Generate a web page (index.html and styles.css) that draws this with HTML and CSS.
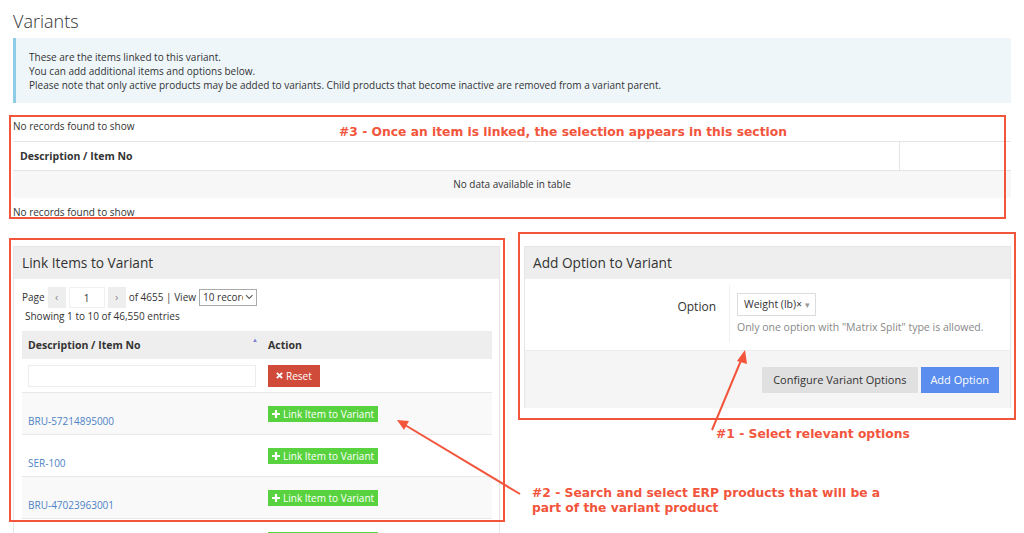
FILE: index.html
```html
<!DOCTYPE html>
<html>

<head>
    <link rel="stylesheet" href="styles.css">
</head>

<body>
    <div class="page">
        <h1 class="title">Variants</h1>
        <div class="info">
            <p>These are the items linked to this variant.</p>
            <p>You can add additional items and options below.</p>
            <p>Please note that only active products may be added to variants. Child products that become inactive are removed from a variant parent.</p>
        </div>

        <div class="linked">
            <p class="note">No records found to show</p>
            <table class="grid linked-grid">
                <thead>
                    <tr>
                        <th>Description / Item No</th>
                        <th class="spare"></th>
                    </tr>
                </thead>
                <tbody>
                    <tr class="odd">
                        <td colspan="2" class="empty">No data available in table</td>
                    </tr>
                </tbody>
            </table>
            <p class="note">No records found to show</p>
        </div>

        <div class="columns">
            <section class="panel">
                <h2 class="panel-head">Link Items to Variant</h2>
                <div class="panel-body">
                    <div class="pager">
                        <span>Page</span>
                        <span class="pg-btn">&lsaquo;</span>
                        <span class="pg-input">1</span>
                        <span class="pg-btn">&rsaquo;</span>
                        <span>of 4655 | View</span>
                        <span class="view-select">
                            <span class="vs-text">10 records</span>
                            <svg width="9" height="6" viewBox="0 0 9 6"><path d="M1 1l3.5 3.5L8 1" fill="none" stroke="#555" stroke-width="1.1"/></svg>
                        </span>
                    </div>
                    <p class="showing">Showing 1 to 10 of 46,550 entries</p>
                    <table class="grid items">
                        <thead>
                            <tr>
                                <th class="desc">Description / Item No <span class="sort">&#9650;</span></th>
                                <th>Action</th>
                            </tr>
                        </thead>
                        <tbody>
                            <tr class="filter">
                                <td><span class="search"></span></td>
                                <td>
                                    <span class="btn btn-reset">
                                        <svg width="7" height="7" viewBox="0 0 8 8"><path d="M1 1l6 6M7 1l-6 6" stroke="#fff" stroke-width="2.2"/></svg>
                                        Reset
                                    </span>
                                </td>
                            </tr>
                            <tr class="odd">
                                <td class="code"><a href="#">BRU-57214895000</a></td>
                                <td><span class="btn btn-link"><svg width="8" height="8" viewBox="0 0 8 8"><path d="M4 0v8M0 4h8" stroke="#fff" stroke-width="2.2"/></svg> Link Item to Variant</span></td>
                            </tr>
                            <tr>
                                <td class="code"><a href="#">SER-100</a></td>
                                <td><span class="btn btn-link"><svg width="8" height="8" viewBox="0 0 8 8"><path d="M4 0v8M0 4h8" stroke="#fff" stroke-width="2.2"/></svg> Link Item to Variant</span></td>
                            </tr>
                            <tr class="odd">
                                <td class="code"><a href="#">BRU-47023963001</a></td>
                                <td><span class="btn btn-link"><svg width="8" height="8" viewBox="0 0 8 8"><path d="M4 0v8M0 4h8" stroke="#fff" stroke-width="2.2"/></svg> Link Item to Variant</span></td>
                            </tr>
                            <tr>
                                <td class="code"><a href="#">BRU-47023963002</a></td>
                                <td><span class="btn btn-link"><svg width="8" height="8" viewBox="0 0 8 8"><path d="M4 0v8M0 4h8" stroke="#fff" stroke-width="2.2"/></svg> Link Item to Variant</span></td>
                            </tr>
                        </tbody>
                    </table>
                </div>
            </section>

            <section class="panel option-panel">
                <h2 class="panel-head">Add Option to Variant</h2>
                <div class="form-row">
                    <label class="form-label">Option</label>
                    <div class="form-field">
                        <span class="opt-select">Weight (lb)<span class="opt-clear">&times;</span><span class="opt-caret">&#9662;</span></span>
                        <p class="help">Only one option with "Matrix Split" type is allowed.</p>
                    </div>
                </div>
                <div class="panel-foot">
                    <span class="btn btn-default">Configure Variant Options</span>
                    <span class="btn btn-primary">Add Option</span>
                </div>
            </section>
        </div>
    </div>

    <!-- annotations drawn over the screenshot -->
    <div class="marks">
        <div class="mark-box box-linked"></div>
        <div class="mark-box box-items"></div>
        <div class="mark-box box-option"></div>
        <p class="mark-text text-linked">#3 - Once an item is linked, the selection appears in this section</p>
        <p class="mark-text text-option">#1 - Select relevant options</p>
        <p class="mark-text text-items">#2 - Search and select ERP products that will be a<br>part of the variant product</p>
        <svg class="arrows" width="1024" height="533" viewBox="0 0 1024 533">
            <line x1="712" y1="430" x2="742" y2="358" stroke="#f2553c" stroke-width="2"/>
            <polygon points="745,350 737,361 747,364" fill="#f2553c"/>
            <line x1="520" y1="494" x2="405" y2="425" stroke="#f2553c" stroke-width="2"/>
            <polygon points="397,420 404,430 409,421" fill="#f2553c"/>
        </svg>
    </div>
</body>

</html>
```

FILE: styles.css
```css
* {
    padding: 0;
    margin: 0;
    box-sizing: border-box;
}

body {
    width: 1024px;
    height: 533px;
    overflow: hidden;
    position: relative;
    background: #fff;
    color: #333;
    font-family: 'Open Sans', 'Noto Sans', sans-serif;
    font-size: 10px;
}

.page {
    padding: 0 13px;
}

.title {
    font-size: 18px;
    font-weight: 300;
    line-height: 26px;
    padding-top: 8px;
    color: #333;
}

.info {
    margin-top: 4px;
    height: 65px;
    padding: 12px 13px 0;
    background: #eef6fa;
    border-left: 3px solid #8fcde6;
    line-height: 14px;
    color: #333;
}

.linked {
    margin-top: 15px;
}

.note {
    line-height: 16px;
    height: 16px;
}

.grid {
    width: 100%;
    border-collapse: collapse;
}

.grid th {
    text-align: left;
    font-weight: bold;
    font-size: 10.5px;
}

.linked-grid {
    margin: 7px 0 6px;
}

.linked-grid th {
    height: 29px;
    padding: 0 7px;
    border-top: 1px solid #e4e4e4;
    border-bottom: 1px solid #e4e4e4;
}

.linked-grid .spare {
    width: 112px;
    border-left: 1px solid #e4e4e4;
}

.linked-grid .empty {
    height: 27px;
    text-align: center;
    background: #f7f7f7;
}

.columns {
    margin-top: 26px;
    display: grid;
    grid-template-columns: 1fr 1fr;
    gap: 24px;
    align-items: start;
}

.panel {
    border: 1px solid #e6e6e6;
    border-bottom: none;
}

.panel-head {
    height: 32px;
    line-height: 32px;
    padding-left: 8px;
    font-size: 13.7px;
    font-weight: normal;
    background: #eeeeee;
    color: #333;
}

.panel-body {
    padding: 8px 7px 0 8px;
}

.pager {
    display: flex;
    align-items: center;
    height: 21px;
    gap: 3px;
}

.pg-btn {
    width: 18px;
    height: 21px;
    line-height: 20px;
    text-align: center;
    background: #eeeeee;
    color: #888;
    font-size: 11px;
}

.pg-input {
    width: 36px;
    height: 21px;
    line-height: 21px;
    text-align: center;
    border: 1px solid #f0f0f0;
}

.view-select {
    display: flex;
    align-items: center;
    width: 58px;
    height: 17px;
    border: 1px solid #aaa;
    padding: 0 3px;
    gap: 2px;
}

.vs-text {
    width: 42px;
    overflow: hidden;
    white-space: nowrap;
}

.showing {
    padding-left: 3px;
    line-height: 14px;
    margin-top: 1px;
}

.items {
    margin-top: 8px;
}

.items th {
    height: 28px;
    padding: 0 6px;
    background: #eeeeee;
}

.items .desc {
    width: 240px;
    position: relative;
}

.sort {
    position: absolute;
    right: 4px;
    top: 5px;
    font-size: 6px;
    color: #7c7fd8;
}

.items td {
    padding: 0 6px;
    vertical-align: top;
}

.items tr.filter td {
    height: 34px;
    padding-top: 6px;
}

.search {
    display: block;
    height: 22px;
    border: 1px solid #ececec;
}

.items tr.odd td {
    background: #f9f9f9;
}

.items tbody tr:not(.filter) td {
    height: 42px;
    border-top: 1px solid #e8e8e8;
    padding-top: 13px;
}

.items tbody tr:not(.filter) td.code {
    padding-top: 21px;
}

.items a {
    color: #4c82c6;
    text-decoration: none;
}

.btn {
    display: inline-flex;
    align-items: center;
    gap: 3px;
    color: #fff;
    white-space: nowrap;
}

.btn-reset {
    height: 22px;
    padding: 0 8px;
    background: #d14b3b;
}

.btn-link {
    height: 16px;
    padding: 0 4px;
    background: #58d23e;
}

.form-row {
    display: flex;
    height: 71px;
}

.form-label {
    width: 204px;
    padding: 20px 13px 0 0;
    text-align: right;
    font-size: 12px;
    line-height: 16px;
}

.form-field {
    flex: 1;
    border-left: 1px solid #f0f0f0;
    margin: 6px 0 8px;
    padding: 8px 0 0 7px;
}

.opt-select {
    display: inline-flex;
    align-items: center;
    height: 23px;
    padding: 0 5px 0 6px;
    border: 1px solid #dcdcdc;
    font-size: 10.5px;
    white-space: nowrap;
}

.opt-clear {
    font-size: 10px;
}

.opt-caret {
    color: #999;
    font-size: 9px;
    margin-left: 3px;
}

.help {
    margin-top: 4px;
    color: #888;
    font-size: 10.5px;
    line-height: 14px;
}

.panel-foot {
    height: 58px;
    padding: 16px 11px 0 0;
    display: flex;
    justify-content: flex-end;
    gap: 3px;
    background: #f5f5f5;
    border-top: 1px solid #ececec;
}

.btn-default {
    height: 26px;
    padding: 0 12px 0 11px;
    background: #e0e0e0;
    color: #333;
    font-size: 11px;
}

.btn-primary {
    height: 26px;
    padding: 0 10px 0 9px;
    background: #5a8dee;
    font-size: 11px;
}

.marks {
    position: absolute;
    left: 0;
    top: 0;
    width: 1024px;
    height: 533px;
    pointer-events: none;
}

.mark-box {
    position: absolute;
    border: 2px solid #f2553c;
}

.box-linked {
    left: 9px;
    top: 115px;
    width: 997px;
    height: 104px;
}

.box-items {
    left: 9px;
    top: 238px;
    width: 496px;
    height: 284px;
}

.box-option {
    left: 518px;
    top: 232px;
    width: 498px;
    height: 188px;
}

.mark-text {
    position: absolute;
    font-family: 'DejaVu Sans', Verdana, sans-serif;
    font-weight: bold;
    font-size: 12.3px;
    line-height: 15px;
    color: #f2553c;
    white-space: nowrap;
}

.text-linked {
    left: 339px;
    top: 125px;
}

.text-option {
    left: 716px;
    top: 427px;
}

.text-items {
    left: 532px;
    top: 486px;
}

.arrows {
    position: absolute;
    left: 0;
    top: 0;
}
```
